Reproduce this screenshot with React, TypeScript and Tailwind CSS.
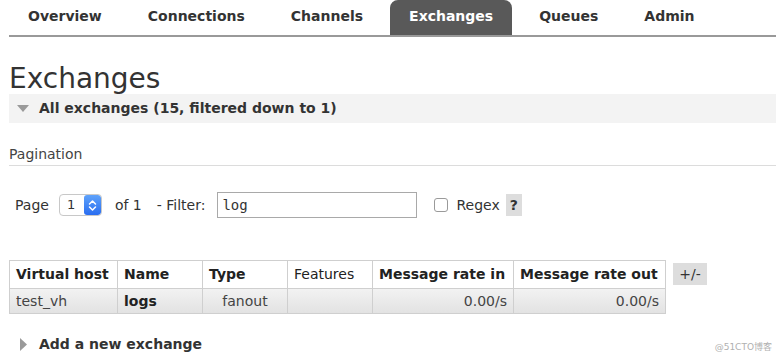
import React from "react"

const tabs = ["Overview", "Connections", "Channels", "Exchanges", "Queues", "Admin"]

function Triangle({ open }: { open: boolean }) {
  return open ? (
    <svg width="12" height="8" viewBox="0 0 12 8" className="shrink-0">
      <path d="M0 0 L12 0 L6 7 Z" fill="#9a9a9a" />
    </svg>
  ) : (
    <svg width="7" height="13" viewBox="0 0 7 13" className="shrink-0">
      <path d="M0 0 L7 6.5 L0 13 Z" fill="#9a9a9a" />
    </svg>
  )
}

export default function App() {
  const font = { fontFamily: '"DejaVu Sans", Verdana, sans-serif' }

  return (
    <div className="relative w-[776px] h-[360px] overflow-hidden bg-white text-[#333] pl-[9px]" style={font}>
      {/* top nav */}
      <ul className="flex gap-[8px] h-[37px] border-b-2 border-[#999] list-none m-0 p-0">
        {tabs.map((t) => (
          <li
            key={t}
            className={`px-[19px] h-[35px] flex items-center pb-[2px] text-[14px] font-bold rounded-t-[8px] ${
              t === "Exchanges" ? "bg-[#595959] text-white" : "text-[#333]"
            }`}
          >
            {t}
          </li>
        ))}
      </ul>

      <h1 className="mt-[26px] text-[28px] leading-[31px] font-normal text-[#333]">Exchanges</h1>

      <div className="h-[29px] bg-[#f3f3f3] flex items-center gap-[10px] pl-[8px]">
        <Triangle open />
        <span className="text-[14px] font-bold text-[#333]">All exchanges (15, filtered down to 1)</span>
      </div>

      <div className="mt-[23px] text-[14px] leading-[17px] pb-[2px] border-b border-[#dcdcdc] text-[#444]">
        Pagination
      </div>

      <div className="mt-[26px] h-[26px] flex items-center text-[14px] text-[#333] pl-[6px]">
        <span>Page</span>
        <div className="ml-[10px] w-[43px] h-[22px] flex items-stretch border border-[#c8c8c8] rounded-[4px] bg-white overflow-hidden">
          <span className="flex-1 pl-[7px] flex items-center text-[13px]">1</span>
          <div className="w-[17px] bg-gradient-to-b from-[#5fa2fa] to-[#2a6df0] flex items-center justify-center rounded-[3px]">
            <svg width="9" height="13" viewBox="0 0 9 13">
              <path d="M1.5 5 L4.5 2 L7.5 5 M1.5 8 L4.5 11 L7.5 8" stroke="white" strokeWidth="1.5" fill="none" strokeLinecap="round" strokeLinejoin="round" />
            </svg>
          </div>
        </div>
        <span className="ml-[13px]">of 1</span>
        <span className="ml-[15px]">- Filter:</span>
        <div className="ml-[12px] w-[200px] h-[26px] border border-[#a9a9a9] flex items-center pl-[4px] text-[14px]" style={{ fontFamily: '"DejaVu Sans Mono", monospace' }}>
          log
        </div>
        <div className="ml-[17px] w-[14px] h-[14px] border border-[#9a9a9a] rounded-[3px] bg-white" />
        <span className="ml-[8px]">Regex</span>
        <span className="ml-[6px] w-[16px] h-[22px] bg-[#dddddd] flex items-center justify-center font-bold">?</span>
      </div>

      <div className="mt-[42px] flex items-start gap-[7px]">
        <table className="border-collapse text-[14px] text-[#222]">
          <thead>
            <tr className="h-[28px] bg-white">
              <th className="w-[108px] border border-[#cfcfcf] text-left font-bold px-[6px]">Virtual host</th>
              <th className="w-[85px] border border-[#cfcfcf] text-left font-bold px-[6px]">Name</th>
              <th className="w-[85px] border border-[#cfcfcf] text-left font-bold px-[6px]">Type</th>
              <th className="w-[85px] border border-[#cfcfcf] text-left font-normal px-[6px]">Features</th>
              <th className="w-[141px] border border-[#cfcfcf] text-left font-bold px-[6px]">Message rate in</th>
              <th className="w-[152px] border border-[#cfcfcf] text-left font-bold px-[6px]">Message rate out</th>
            </tr>
          </thead>
          <tbody>
            <tr className="h-[25px] bg-gradient-to-b from-[#f2f2f2] to-[#e2e2e2] text-[#444]">
              <td className="border border-[#cfcfcf] px-[6px]">test_vh</td>
              <td className="border border-[#cfcfcf] px-[6px] font-bold text-[#222]">logs</td>
              <td className="border border-[#cfcfcf] px-[6px] text-center">fanout</td>
              <td className="border border-[#cfcfcf] px-[6px]"></td>
              <td className="border border-[#cfcfcf] px-[6px] text-right">0.00/s</td>
              <td className="border border-[#cfcfcf] px-[6px] text-right">0.00/s</td>
            </tr>
          </tbody>
        </table>
        <span className="mt-[3px] w-[34px] h-[22px] bg-[#dddddd] flex items-center justify-center text-[14px] text-[#333]">+/-</span>
      </div>

      <div className="mt-[20px] h-[20px] flex items-center gap-[12px] pl-[11px]">
        <Triangle open={false} />
        <span className="text-[14px] font-bold text-[#333]">Add a new exchange</span>
      </div>

      <span
        className="absolute right-[4px] bottom-[6px] text-[9px] text-[#b0b0b0]"
        style={{ fontFamily: '"DejaVu Sans", "Noto Sans CJK SC", sans-serif' }}
      >
        @51CTO博客
      </span>
    </div>
  )
}
